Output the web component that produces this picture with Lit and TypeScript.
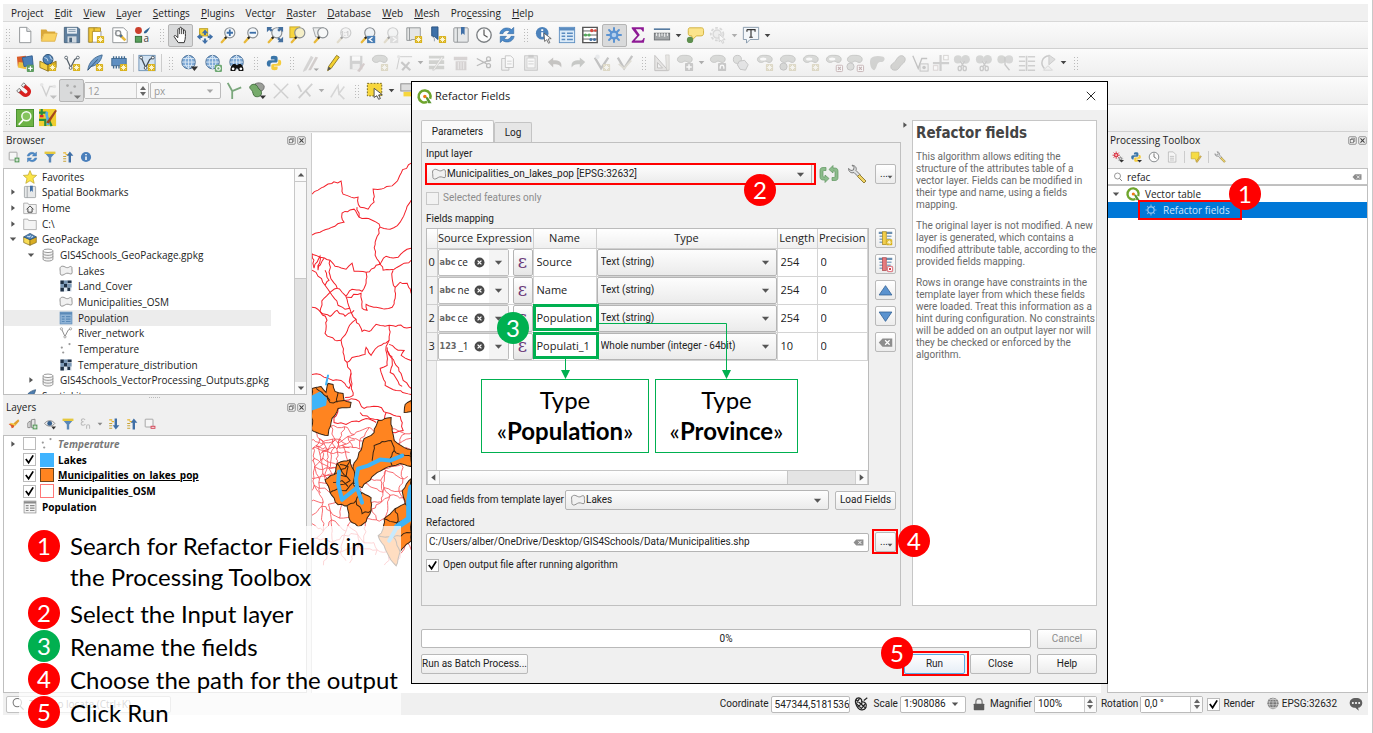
import { LitElement, html, svg, css, nothing } from "lit";
import { customElement, property } from "lit/decorators.js";
import { classMap } from "lit/directives/class-map.js";

/* ---------- icon library (20 x 20 grid) ---------- */
const lens = (fill: string) => svg`
  <path d="M8 12.5 3 18" stroke="#e8b93a" stroke-width="2.6" stroke-linecap="round"/>
  <path d="M8.6 11.8 6.6 14" stroke="#222" stroke-width="2.4"/>
  <circle cx="12" cy="7.5" r="5.6" fill="${fill}" stroke="#8a8f93" stroke-width="1.3"/>`;
const star = svg`<g transform="translate(11 11)"><rect width="8" height="8" rx="1" fill="#d9b21c"/><path d="M4 1v6M1 4h6M1.9 1.9l4.2 4.2M6.1 1.9 1.9 6.1" stroke="#fffbe0" stroke-width="1"/></g>`;
const cross = svg`<g transform="translate(12 12)"><rect x=".5" y=".5" width="7" height="7" rx="1" fill="#fff" stroke="#d23c4c"/><path d="M2.4 2.4l3.2 3.2M5.6 2.4 2.4 5.6" stroke="#d23c4c" stroke-width="1.3"/></g>`;
const gearPath = "M10 2.2v15.6M2.2 10h15.6M4.5 4.5l11 11M15.5 4.5l-11 11";
const gear = (c: string, hole: string) => svg`<path d="${gearPath}" stroke="${c}" stroke-width="2.2" stroke-linecap="round"/><circle cx="10" cy="10" r="5" fill="${c}"/><circle cx="10" cy="10" r="2.6" fill="${hole}"/>`;
const blob = svg`<path d="M2 4.500C4 1 8 1.500 11 1.500c4 0 7 1.500 7 4.500s-3 4-5 3-3-1.500-4.500-.5C6 10.500 0 9 2 4.500Z" fill="#aab0a4" stroke="#777c72"/>`;
const globe = svg`<circle cx="9.500" cy="9" r="7.500" fill="#7ea9d6" stroke="#41668f"/><path d="M2 9h15M3.500 5h12M3.500 13h12M9.500 1.500v15M9.500 1.500c-5 4-5 11 0 15M9.500 1.500c5 4 5 11 0 15" fill="none" stroke="#e3eef8" stroke-width=".9"/>`;
const refreshArrows = (c: string) => svg`<path d="M2 8.500C3 2 11 .5 15 4l2.500-2.500v7H10.500L13 6C10.500 4 7 5 5.500 8.500ZM18 11.500c-1 6.500-9 8-13 4.500l-2.500 2.500v-7h7L7 14c2.500 2 6 1 7.500-2.500Z" fill="${c}" stroke="#2f629a" stroke-width=".6"/>`;
const python = svg`<path d="M10 2c-3 0-3.500 1-3.500 2.500V6h4v1H4.800C3 7 2 8.500 2 10.500S3 14 4.500 14H6v-2c0-1.600 1-2.500 2.600-2.500H12c1.300 0 2-.8 2-2V4.500C14 2.800 12.700 2 10 2Z" fill="#3a75a8"/><path d="M10.500 18c3 0 3.500-1 3.500-2.500V14h-4v-1h5.700c1.800 0 2.300-1.500 2.300-3.200C18 7.800 17.500 6.500 15.500 6.500H14.700V8.500c0 1.600-1 2.500-2.600 2.500H9c-1.300 0-2 .8-2 2v2.500c0 1.700 1 2.500 3.500 2.500Z" fill="#f5cc3c"/>`;
const polyShape = svg`<path d="M2.500 4c2-1.500 4-1 6.500.4s4.500.8 6-.4c2-1.200 4-.2 3.500 3-.2 2 1 5-.4 7-2 1-4-1.400-7.100-.8-2.800.6-4.400 3-7 2.800C1 15.500 2 13 1.700 10.500 1.500 8 .8 5.200 2.500 4Z" fill="#f1f1f1" stroke="#8b8b8b" stroke-width="1.300"/>`;
const vLine = (c: string) => svg`<path d="M4 5 8.500 15 13 6 17 4" fill="none" stroke="${c}" stroke-width="1.400"/><g fill="#fff" stroke="${c}"><circle cx="3.500" cy="4" r="1.600"/><circle cx="8.500" cy="15.500" r="1.600"/><circle cx="16.500" cy="4" r="1.600"/></g>`;
const tableGrid = (bg: string, line: string) => svg`<rect x="1.500" y="1.500" width="17" height="17" fill="${bg}" stroke="${line}"/><path d="M1.500 3.500h17" stroke="${line}" stroke-width="3"/><path d="M4 8h4M10 8h6.500M4 11.500h4M10 11.500h6.500M4 15h4M10 15h6.500" stroke="${line}" stroke-width="1.700"/>`;
const docFile = svg`<path d="M4 1.500h8l4.500 4.500v12.500H4Z" fill="#fff" stroke="#8b8f92"/><path d="M12 1.500v4.500h4.500" fill="#e4e6e8" stroke="#8b8f92"/>`;
const scissors = svg`<g fill="none" stroke="#8c8c8c" stroke-width="1.500"><path d="M8 8l4 6M13 8l-4 6"/><ellipse cx="7.500" cy="16" rx="1.800" ry="2.400"/><ellipse cx="13" cy="16" rx="1.800" ry="2.400"/></g>`;
const arrowsIn = svg`<path d="M2 2h5v3h3v2H6V4H2Z" fill="#e9b52d"/><path d="M2 9h5M2 13h5M2 17h5" stroke="#c7a338" stroke-width="1.700"/>`;

const icons: Record<string, unknown> = {
  none: nothing,
  newfile: docFile,
  folder: svg`<path d="M1 4h6l1.500 2H17v3H4L1 17Z" fill="#d9a83a"/><path d="M4.500 8H19l-2.500 9H1.500Z" fill="#f9d262" stroke="#d9a83a" stroke-width=".8"/>`,
  save: svg`<path d="M1.500 1.500h15l2 2v15h-17Z" fill="#5f7f9e" stroke="#48637d"/><rect x="4.500" y="2" width="11" height="6.500" fill="#e6edf3"/><path d="M6 4h8M6 6h8" stroke="#7c93a8"/><rect x="5" y="11.500" width="10" height="7" fill="#cfd8df"/><rect x="7" y="13" width="3" height="5" fill="#48637d"/>`,
  layout: svg`<path d="M1.500 2h10l4 4v12h-14Z" fill="#fff" stroke="#8b8f92"/><path d="M2 2h6v4H6v12H2Z" fill="#f3c93b" stroke="#b18f24"/><path d="M8 2h7v4H8Z" fill="#f3c93b" stroke="#b18f24"/>${star}`,
  layoutmgr: svg`<path d="M2 2h12l4 4v12.500H2Z" fill="#fff" stroke="#8b8f92"/><path d="M4 5h5M4 8h3" stroke="#c5c9cc"/><circle cx="8" cy="8" r="2.800" fill="none" stroke="#8b8f92" stroke-width="1.500"/><path d="m10 10 6 6" stroke="#e7b93c" stroke-width="3"/><path d="m10 10 2 2" stroke="#4f6f95" stroke-width="3"/>`,
  style: svg`<circle cx="5" cy="5" r="3.800" fill="#cb3f2c"/><path d="M11 8c0-3 3-4 7-7-2 4-4 8-7 7Z" fill="#2e6293"/><rect x="1.500" y="11.500" width="7" height="6.500" fill="#58a05c" stroke="#2f6b34"/><text x="10.500" y="18" font-size="11" font-family="Open Sans" fill="#444">a</text>`,
  hand: svg`<path d="M7 18.500c-1-2-3.500-4.500-4.500-6.500-.6-1.300 1-2 2-.9L6.500 13V4c0-1.500 2-1.500 2 0V2.500c0-1.500 2.200-1.500 2.200 0V4c0-1.400 2.100-1.400 2.100 0v1.500c0-1.300 2-1.300 2 0 0 4 .7 8-1.300 13Z" fill="#fff" stroke="#333" stroke-width="1.100"/><path d="M8.500 4v5M10.700 4v5M12.800 5v4" stroke="#333"/>`,
  panfree: svg`<rect x="4" y="3" width="9" height="8" fill="#f7d63c" stroke="#b79a1d"/><g fill="#3f6fa7"><path d="m10 4 3.500 4h-2.300v2H8.800V8H6.500ZM10 20l3.500-4h-2.300v-2H8.800v2H6.500ZM1 12l4-3.500v2.300h2v2.400H5v2.300ZM19 12l-4-3.500v2.300h-2v2.400h2v2.300Z"/></g>`,
  zoomin: svg`${lens("#f4f8fc")}<path d="M12 4v7M8.500 7.500h7" stroke="#3b6ea8" stroke-width="2"/>`,
  zoomout: svg`${lens("#f4f8fc")}<path d="M8.500 7.500h7" stroke="#3b6ea8" stroke-width="2"/>`,
  zoomfull: svg`${lens("#eef3f8")}<g fill="#45709f"><path d="M1 1h6L5.500 2.500l2 2-2 2-2-2L1 7ZM19 1h-6l1.500 1.500-2 2 2 2 2-2L19 7ZM19 18h-6l1.500-1.500-2-2 2-2 2 2L19 12Z"/></g>`,
  zoomsel: svg`<rect x="1" y="1" width="11" height="12" fill="#f7d63c" stroke="#c3a42a"/>${lens("#f5efc8")}`,
  zoomlayer: svg`<path d="M1 2h12v10H4Z" fill="#eceeee" stroke="#9a9d9f"/>${lens("#f7f8f8")}`,
  native: svg`${lens("#f2f2f2")}<text x="6" y="11" font-size="7" font-family="Open Sans" font-weight="700" fill="#888">1:1</text>`,
  zoomlast: svg`${lens("#eef2f5")}<rect x="9" y="11" width="9" height="8" fill="#4b7fb5"/><path d="m15 12.500-3.500 2.500 3.500 2.500" stroke="#fff" fill="none" stroke-width="1.500"/>`,
  zoomnext: svg`${lens("#eef2f5")}<rect x="9" y="11" width="9" height="8" fill="#bbb"/><path d="m12 12.500 3.500 2.500-3.500 2.500" stroke="#fff" fill="none" stroke-width="1.500"/>`,
  newview: svg`<path d="M2 2h15v13H7v1H2Z" fill="#e5e6e6" stroke="#909496"/><path d="M5 2v14" stroke="#909496"/>${star}`,
  newbook: svg`<path d="M3 1h7v14l-3.500-3L3 11Z" fill="#3d70a8" stroke="#27507f"/><path d="M3 11l3 3v3" stroke="#8b98a5"/>${star}`,
  books: svg`<rect x="2" y="2" width="16" height="16" rx="1" fill="#e6e8e9" stroke="#8d9194"/><path d="M6 2v16" stroke="#8d9194"/><path d="M10 1h4v9l-2-2-2 2Z" fill="#3f6fa7"/>`,
  clock: svg`<circle cx="10" cy="10" r="8" fill="#fbfbfb" stroke="#7b7f82" stroke-width="1.500"/><path d="M10 4v6l4 2.500" fill="none" stroke="#555" stroke-width="1.300"/>`,
  refresh: refreshArrows("#4c8ac9"),
  identify: svg`<circle cx="8" cy="8" r="7" fill="#4c82bb"/><path d="M8 7v5M8 3.500v2" stroke="#fff" stroke-width="2.200"/><path d="m10 8 8 6-3.500.5 2 4-1.500.7-2-4-2.300 2Z" fill="#fff" stroke="#555" stroke-width=".9"/>`,
  table: tableGrid("#dcebf8", "#5b8cc0"),
  calc: svg`<path d="M2 1.500h16v17H2Z" fill="#fff" stroke="#555" stroke-width="1.600"/><path d="M2 5.500h16M2 10h16M2 14.500h16" stroke="#555"/><g fill="#d94a3f"><circle cx="12" cy="5" r="1.900"/><circle cx="16" cy="5" r="1.500"/></g><g fill="#53ab5b"><circle cx="5" cy="10" r="1.800"/><circle cx="9" cy="10" r="1.800"/></g><g fill="#4472a5"><circle cx="11" cy="15" r="1.700"/><circle cx="15" cy="15" r="1.700"/></g>`,
  gear: gear("#5b93d2", "#b4d0ee"),
  gearlight: svg`<path d="${gearPath}" stroke="#7fb3e6" stroke-width="1.600"/><circle cx="10" cy="10" r="4.500" fill="#0078d7" stroke="#9cc8f0" stroke-width="1.600"/>`,
  sigma: svg`<path d="M3 1.500h13.500v4.500H15c-.4-1.800-1.500-2.500-3.500-2.500H7.500L12 10l-5.500 6h6c2 0 3-.8 3.600-2.800h1.400L16.500 18.500H3v-1.200L9 10.500 3 2.800Z" fill="#8e1a95"/>`,
  measure: svg`<path d="M1 3.500h18" stroke="#34618e" stroke-width="1.500"/><rect x="1.500" y="8" width="17" height="7.500" fill="#a3a6a8" stroke="#6b6f72"/><path d="M4 8v3M7 8v4M10 8v3M13 8v4M16 8v3" stroke="#fff"/>`,
  tip: svg`<path d="M4 2h13c2 0 2.500 1 2.500 3v3c0 2-1 3-3 3h-5l-5 5v-5C3 11 2.500 10 2.500 8V5c0-2 .5-3 1.500-3Z" fill="#fbe48b" stroke="#cfae38"/><circle cx="4.500" cy="15.500" r="3.500" fill="#5e8f4f"/>`,
  action: svg`<g opacity=".8"><circle cx="9" cy="9" r="7" fill="none" stroke="#999" stroke-width="2" stroke-dasharray="3 2"/><circle cx="9" cy="9" r="4.500" fill="#ddd" stroke="#999" stroke-width="1.500"/></g><path d="m11 9 7 6-3 .4 1.500 3.200-1.500.7-1.600-3.500-2 1.700Z" fill="#fff" stroke="#999"/>`,
  text: svg`<path d="M1.500 1.500h17V15H9l-4 4v-4H1.500Z" fill="#f4f7fa" stroke="#8295a8"/><path d="M5.500 4h9v2.500M10 4v8.500M5.500 4v2.500M8 12.500h4" stroke="#333" stroke-width="1.300" fill="none"/>`,
  layers: svg`<path d="m1 3 10-1 1 10-10 2Z" fill="#d95c2a"/><path d="m3 9 9 1-1 7-9-2Z" fill="#efc23f"/><path d="m7 4 11-2 1 10-10 2Z" fill="#4b7fb8" stroke="#335e8d"/><rect x="12" y="12" width="8" height="8" rx="1" fill="#5e9d61"/><path d="M16 13.500v5M13.500 16h5" stroke="#fff" stroke-width="1.400"/>`,
  gpkgnew: svg`<path d="M1 8l9 4v7l-9-4Z" fill="#f4cf43" stroke="#8f741b"/><path d="m10 12 9-4v7l-9 4Z" fill="#d9ad23" stroke="#8f741b"/><circle cx="10" cy="6" r="5.500" fill="#4e81b4" stroke="#244a70"/><path d="M6 4l3 1 1 3M12 2l1 3 2 1" stroke="#c9ddef" fill="none"/>${star}`,
  gpkg: svg`<path d="M1 7l9 4v8l-9-4Z" fill="#f8dc55" stroke="#7d6518"/><path d="m10 11 9-4v8l-9 4Z" fill="#d9ad23" stroke="#7d6518"/><path d="M1 7l9-5 9 5-9 4Z" fill="#4e81b4" stroke="#244a70"/><path d="M6 6l3 1 2-2M12 8l2-2" stroke="#d4e5f4" fill="none" stroke-width="1.500"/>`,
  vnew: svg`${vLine("#55606a")}${star}`,
  feather: svg`<path d="M2 18C3 9 9 3 18 1c-1 7-6 12-13 13Z" fill="#6f9cca" stroke="#3e6890"/><path d="M2 18 13 6" stroke="#2f5274"/>${star}`,
  memory: svg`<rect x="2" y="5" width="16" height="8" fill="#5f8fc2" stroke="#3e6890"/><path d="M4 2.500v3M7 2.500v3M10 2.500v3M13 2.500v3M16 2.500v3M4 13v3M7 13v3M10 13v3" stroke="#3e6890" stroke-width="1.500"/>${star}`,
  virtual: svg`<rect x="1" y="1.500" width="18" height="17" fill="#d3e3f2" stroke="#6b90b5"/>${vLine("#3f4b56")}${star}`,
  globeadd: svg`${globe}<path d="M12 14h8l-4 5Z" fill="#333"/>`,
  globecog: svg`${globe}<rect x="12" y="12" width="8" height="8" rx="1.500" fill="#6da872"/><circle cx="16" cy="16" r="2" fill="none" stroke="#fff" stroke-width="1.300"/>`,
  binoc: svg`${globe}<path d="M3 19c-1-3 1-7 3-8h2l2 1.500L12 11h2c2 1 4 5 3 8h-5l-1-3H9l-1 3Z" fill="#111"/><circle cx="5.700" cy="16.500" r="1.500" fill="#fff"/><circle cx="14.300" cy="16.500" r="1.500" fill="#fff"/>`,
  python,
  pencils: svg`<path d="m3 17 8-15 3 2-8 14-4 2Z" fill="#aaa6a2"/><path d="m8 18 8-15 3 1-8 14Z" fill="#b98f86"/><path d="m14 16h6l-3 3Z" fill="#333"/>`,
  pencil: svg`<path d="M4 18.500 5 14 14 1.500l3 2L8 16Z" fill="#f5d12f" stroke="#8b7828"/><path d="M4 18.500 5 14l3 2Z" fill="#555"/>`,
  savered: svg`<path d="M2 2h14v15H2Z" fill="#9a9d9f"/><rect x="4.500" y="2.500" width="9" height="5" fill="#fff"/><rect x="5" y="11" width="8" height="6" fill="#e5e5e5"/><path d="m10 19 7-9 2 1-6 9Z" fill="#c88"/>`,
  addfeat: svg`${blob}${star}`,
  vertex: svg`<path d="M2 17 5 3h14" fill="none" stroke="#888"/><path d="m7 9 10 9M16 9 8 18" stroke="#888" stroke-width="2.400"/><circle cx="4" cy="3" r="1.800" fill="#ccc"/>`,
  tableedit: svg`<path d="M1 2h17v3H1ZM1 7h17v4H1ZM1 13h17v4H1Z" fill="#9aa18c"/><path d="m5 18 10-15 2 1L7 18Z" fill="#f2ead2" stroke="#888" stroke-width=".7"/>`,
  trash: svg`<path d="M2 3h15v4H2ZM4 8h12v10H4Z" fill="#b79c9c"/><path d="M7 9v8M10 9v8M13 9v8" stroke="#efe5e5"/>`,
  cut: svg`<path d="M2 5l11 6M2 13l11-5 5-1" stroke="#666" stroke-width="1.400" fill="none"/><circle cx="15" cy="5.500" r="2.200" fill="none" stroke="#666" stroke-width="1.400"/><circle cx="15" cy="13" r="2.200" fill="none" stroke="#666" stroke-width="1.400"/>`,
  copy: svg`<path d="M3 5h8v13H3Z" fill="#eee" stroke="#777"/><path d="M7 2h6l3 3v10H7Z" fill="#fff" stroke="#777"/><path d="M9 8h5M9 11h5" stroke="#999"/>`,
  paste: svg`<rect x="3" y="2" width="14" height="16" fill="#ddd" stroke="#777"/><rect x="5.500" y="4.500" width="9" height="11" fill="#fff" stroke="#999"/><path d="M7 8h6M7 11h6" stroke="#999"/><rect x="7" y="1" width="6" height="3" fill="#888"/>`,
  undo: svg`<path d="m2 9 6-5v3c7 0 10 2 9 8-2-3-4-4-9-3.500V15Z" fill="#8a7a6a"/>`,
  redo: svg`<path d="m18 9-6-5v3C5 7 2 9 3 15c2-3 4-4 9-3.500V15Z" fill="#7f8a78"/>`,
  vadd: svg`<path d="M2 4l7 12 8-12" fill="none" stroke="#777" stroke-width="2.500"/><circle cx="5" cy="3" r="2.500" fill="#c8d8e8"/>${star}`,
  vcheck: svg`<path d="M2 4l7 12 9-14" fill="none" stroke="#777" stroke-width="2.500"/><path d="M3 11l6 5 8-9" fill="none" stroke="#c9b97b" stroke-width="2"/>`,
  ruler: svg`<path d="M2 1.500v17h15Z" fill="#d8cdc4" stroke="#776d66"/><path d="M5 9.500v6h5.500Z" fill="#f4f4f4" stroke="#776d66"/><path d="M14 1h4v17h-3Z" fill="#d8cfb8" stroke="#8a816a" stroke-width=".7"/>`,
  move: svg`${blob}<rect x="10" y="10" width="9" height="9" rx="1" fill="#888"/><path d="M14.500 11.500v6M11.500 14.500h6" stroke="#fff" stroke-width="1.700"/>`,
  rotate: svg`${blob}<rect x="10" y="10" width="9" height="9" rx="1" fill="#888"/><path d="M12.500 16.500v-2a2 2 0 0 1 4 0v2" fill="none" stroke="#fff" stroke-width="1.500"/>`,
  simplify: svg`<circle cx="6" cy="6" r="4.500" fill="#b9beb2" stroke="#777"/><path d="m8 8 6-1 4 5-3 6-6-1-3-5Z" fill="#c8ccd2" stroke="#777"/>`,
  ring: svg`${blob}<ellipse cx="8" cy="5.500" rx="3.500" ry="1.700" fill="#fff"/>${star}`,
  part: svg`${blob}<circle cx="5" cy="14" r="4" fill="#aab0a4" stroke="#777"/>${star}`,
  delring: svg`${blob}<ellipse cx="8" cy="5.500" rx="3.500" ry="1.700" fill="#fff"/>${cross}`,
  delpart: svg`${blob}<circle cx="5" cy="14" r="4" fill="#b9beb2" stroke="#777"/>${cross}`,
  reshape: svg`<path d="M3 5c4-4 10-3 14-2 3 2 1 6-3 6-5 0-3 6-7 9-4 0-6-9-4-13Z" fill="#9ea198"/>`,
  offset: svg`<path d="M2 14c0-3 3-3 5-6s4-7 8-6c5 2 3 7 0 9s-4 7-8 7c-3 0-5-1-5-4Z" fill="#a3a396" stroke="#77776a"/>`,
  vdel: svg`<path d="M2 2l6 14 4-11h6" fill="none" stroke="#777" stroke-width="1.500"/><rect x="10" y="11" width="9" height="8" fill="#eee" stroke="#777"/><circle cx="14.500" cy="15" r="2" fill="#888"/>`,
  splitp: svg`<path d="M9.500 1v18M1 10h18" stroke="#999" stroke-width="2.500"/><rect x="13" y="1.500" width="5" height="5" fill="#fff" stroke="#a98"/><rect x="1.500" y="13" width="5" height="5" fill="#fff" stroke="#c99"/>`,
  split: svg`<circle cx="5.500" cy="6" r="4.500" fill="#a0a8a0"/><circle cx="14" cy="6" r="4.800" fill="#a0a8a0"/>${scissors}`,
  merge: svg`<circle cx="6" cy="6" r="4.500" fill="#a0a89a"/><circle cx="14.500" cy="6" r="4.500" fill="#a6aba6"/><path d="M10 3v9l5 6" stroke="#888" fill="none" stroke-width="1.500"/>`,
  align: svg`<path d="M1 3h7M11 3h8M1 8h7M11 8h8M1 13h7M11 13h8M1 18h7M11 18h8M9.500 2v17" stroke="#999" stroke-width="1.800"/>`,
  rotsym: svg`<path d="M11 2C3 3 1 11 6 16" fill="none" stroke="#888" stroke-width="1.600"/><path d="M11 1v11l7-6Z" fill="#bbb" stroke="#888"/><path d="M5 18h10l-5-5Z" fill="#eee" stroke="#aaa"/>`,
  magnet: svg`<g transform="rotate(-50 10 10)"><path d="M4 4v7a6 6 0 0 0 12 0V4h-4v7a2 2 0 0 1-4 0V4Z" fill="#d8201f"/><path d="M4 3h4v3H4ZM12 3h4v3h-4Z" fill="#eee" stroke="#555" stroke-width=".7"/></g>`,
  vsnap: svg`<path d="M3 3l5 12 4-10h6" fill="none" stroke="#999" stroke-width="1.500"/><circle cx="3" cy="3" r="2" fill="#ccc"/><circle cx="17" cy="5" r="2" fill="#ccc"/><path d="M12 15h8l-4 4Z" fill="#777"/>`,
  dots: svg`<g fill="#aaa"><circle cx="5" cy="4" r="1.500"/><circle cx="13" cy="5" r="1.500"/><circle cx="9" cy="12" r="1.500"/></g><path d="M12 15h8l-4 4Z" fill="#777"/>`,
  topo: svg`<path d="M3 1l5 9 10-4M8 10v9" stroke="#7aa77c" stroke-width="2" fill="none"/>`,
  polyg: svg`<path d="M8 2c4-2 9-1 10 3 0 4-3 6-7 5Z" fill="#9b9e98" stroke="#666"/><path d="M3 4c3-3 7-1 8 2s4 2 4 6-4 5-7 4-2-5-4-7-3-3-1-5Z" fill="#76ab6b" stroke="#3e6a3a"/><path d="M13 15h7l-3.500 4Z" fill="#333"/>`,
  xcross: svg`<path d="m2 2 16 16M18 2 2 18" stroke="#999" stroke-width="1.600"/>`,
  cutseg: svg`<path d="m2 3 4 8M18 2 3 18M10 9l6 7" stroke="#999" stroke-width="2"/>`,
  trace: svg`<path d="m2 17 8-13 1 9 6-8M11 13l6 6" stroke="#aaa" stroke-width="1.800" fill="none"/>`,
  select: svg`<rect x="1.500" y="1.500" width="16" height="14" fill="#f7d63c" stroke="#6b5d17" stroke-dasharray="2 1.500"/><path d="m9 7 9 7-4 .4 2 4-2 .8-2-4-3 2Z" fill="#fff" stroke="#444"/>`,
  selform: svg`<rect x="2" y="2" width="15" height="8" fill="#ddd" stroke="#888"/><rect x="5" y="11" width="14" height="5" fill="#f7d63c"/>`,
  greenlens: svg`<rect x=".5" y=".5" width="19" height="19" fill="#6db345" stroke="#418a2a"/><circle cx="11.500" cy="8" r="5" fill="#86c45e" stroke="#f6fbf2" stroke-width="1.700"/><path d="m8 12-5 5.500" stroke="#fff" stroke-width="2"/>`,
  maptool: svg`<rect width="19" height="19" fill="#f0cd2f"/><path d="M0 4h8M3 0v9M0 12h7v7M10 10l4 9" stroke="#2c8c3c" stroke-width="2.500"/><path d="M9 3c-3 6 3 6 1 15" stroke="#58aee8" stroke-width="3" fill="none"/><path d="m8 15 10-14 2 1-9 14Z" fill="#a4471e"/><path d="M1 8h4" stroke="#d23" stroke-width="2.500"/>`,
  arrow: svg`<path d="M2 6h16l-8 9Z" fill="#444"/>`,
  // dock panels
  addlayer: svg`<rect x="2" y="2" width="13" height="13" rx="1" fill="#f6f6f6" stroke="#777"/><rect x="11" y="11" width="8" height="8" fill="#5e9d61"/><path d="M15 12.500v5M12.500 15h5" stroke="#fff" stroke-width="1.500"/>`,
  filter: svg`<path d="M1 3h18l-7 8v8H8v-8Z" fill="#5a88b8"/><path d="M1 1h18v4H1Z" fill="#e5c83c"/>`,
  collapse: svg`${arrowsIn}<path d="m13 1 6 7h-4v11h-4V8H8Z" fill="#3f6fa7"/>`,
  expand: svg`${arrowsIn}<path d="m13 19 6-7h-4V1h-4v11H8Z" fill="#3f6fa7"/>`,
  info: svg`<circle cx="10" cy="10" r="8.500" fill="#4a7fbb"/><path d="M10 9v6M10 5v2" stroke="#fff" stroke-width="2.500"/>`,
  favorite: svg`<path d="m10 .8 2.700 6.400 6.800.5-5.200 4.500 1.700 6.900-6-3.700-6 3.700 1.700-6.900L.5 7.700l6.800-.5Z" fill="#fbe548" stroke="#b59b1d" stroke-width=".9"/>`,
  home: svg`<path d="M1 3h6l1 2h11v13H1Z" fill="#f4f4f4" stroke="#999"/><path d="m5 12 5-5 5 5M7 11v5h6v-5" fill="none" stroke="#444" stroke-width="1.400"/>`,
  dir: svg`<path d="M1 3h6l1 2h11v13H1Z" fill="#f4f4f4" stroke="#999"/>`,
  db: svg`<path d="M3 4v12c0 3.500 14 3.500 14 0V4" fill="#f3f3f3" stroke="#8e8e8e" stroke-width="1.300"/><ellipse cx="10" cy="4" rx="7" ry="2.500" fill="#fff" stroke="#8e8e8e" stroke-width="1.300"/><path d="M3 8c0 3.300 14 3.300 14 0M3 12c0 3.300 14 3.300 14 0" fill="none" stroke="#8e8e8e" stroke-width="1.300"/>`,
  poly: polyShape,
  raster: svg`<rect x="2" y="2" width="16" height="16" fill="#dfe8f0"/><path d="M2 2h5v5H2ZM12 2h6v4h-6ZM7 7h5v5H7ZM2 12h5v6H2ZM12 12h4v5h-4Z" fill="#1f3146"/><path d="M7 2h5v5H7ZM12 7h6v5h-6ZM2 7h5v5H2Z" fill="#7b98b6"/>`,
  line: vLine("#8b8b8b"),
  point: svg`<g fill="#999"><circle cx="15" cy="3" r="1.600"/><circle cx="4" cy="8" r="1.600"/><circle cx="6" cy="15" r="1.600"/></g>`,
  tablegrey: tableGrid("#f4f4f4", "#8b8b8b"),
  tableblue: tableGrid("#8fb3d6", "#5b8ab8"),
  featherp: svg`<path d="M2 18C3 9 9 3 18 1c-1 7-6 12-13 13Z" fill="#4d7cae" stroke="#2f5274"/>`,
  brush: svg`<path d="m9 9 8-7 2 3-7 8Z" fill="#e0a030"/><path d="M1 10c4-2 6-1 10 2-1 4-3 5-5 5 0-3-2-5-5-7Z" fill="#dd5b2b"/><path d="M4 9c3 0 5 1 8 3" stroke="#f4cf43" stroke-width="2.500" fill="none"/>`,
  group: svg`<path d="M3 8l4-3v11H3ZM9 3l6-1v14H9Z" fill="#e5e5e5" stroke="#777" stroke-width="1.300"/><rect x="11" y="11" width="8" height="8" fill="#5e9d61"/><path d="M15 12.500v5M12.500 15h5" stroke="#fff" stroke-width="1.500"/>`,
  eye: svg`<path d="M1 9c4-6 13-6 17 0-4 6-13 6-17 0Z" fill="#ececec" stroke="#777" stroke-width="1.300"/><circle cx="9.500" cy="9" r="4" fill="#355f8d"/><path d="M12 14h8l-4 5Z" fill="#333"/>`,
  eps: svg`<path d="M8.500 3.500C6-.5 1.500 2 2.500 4.500 3 6 5 6.200 6 6.200 3 6.200 1.500 7.800 2 10c.8 2.800 5.500 2.600 7 0M11 18v-5c0-2.500 5-2.500 5 0v5" fill="none" stroke="#bbb" stroke-width="1.700"/>`,
  removelayer: svg`<rect x="2" y="2" width="13" height="13" rx="1" fill="#f6f6f6" stroke="#777"/><rect x="11" y="13" width="8" height="5" fill="#d4485a"/><path d="M12.500 15.500h5" stroke="#fff" stroke-width="1.500"/>`,
  redcog: svg`<g transform="scale(.7)">${gear("#d9303f", "#f2b8bd")}</g><g transform="translate(9 8) scale(.5)">${gear("#888", "#ddd")}</g><path d="M12 15h8l-4 4Z" fill="#333"/>`,
  pyarrow: svg`${python}<path d="M12 15h8l-4 4Z" fill="#333"/>`,
  log: svg`<path d="M4 1.500h8l4.500 4.500v12.500H4Z" fill="#f5f5f5" stroke="#a5a5a5"/><path d="M6.500 9h7M6.500 12h7M6.500 15h7" stroke="#a5a5a5"/>`,
  note: svg`<path d="M2 2h13v10l-5 5-1-4H2Z" fill="#f6dc45" stroke="#bfa42a"/><path d="m10 18 7-10 2 1-7 10Z" fill="#eec64f" stroke="#8e7426" stroke-width=".7"/>`,
  wrench: svg`<path d="M1.500 4.500c0 3.500 3 5 5.500 4l4 4 2-2-4-4c1-2.500-.6-5-4-5.300L7 3.500 6.500 6 4 6.500Z" fill="#dfe1e2" stroke="#777"/><path d="m10.500 12.500 2-2L19 17l-2 2Z" fill="#f0d465" stroke="#93803a"/>`,
  iterate: svg`<g fill="#8cbc8c" stroke="#5e955f" stroke-width=".7"><path d="M7 3.500H4c-2 0-3 1-3 3v6c0 2.500 1 3.500 3.500 3.500H6v2.500L10 14.500 6 11v2H5c-.7 0-1-.3-1-1V7.500c0-.7.300-1 1-1h2Z"/><path d="M13 16.500h3c2 0 3-1 3-3v-6C19 5 18 4 15.500 4H14V1.500L10 5.500 14 9V7h1c.7 0 1 .3 1 1v4.500c0 .7-.300 1-1 1h-2Z"/></g>`,
  addfield: svg`<rect x="1" y="1" width="18" height="3" fill="#6c8fb0"/><path d="M2 7h5M2 11h5M2 15h5M12 7h6M12 11h5" stroke="#8aa9c7" stroke-width="2"/><rect x="6" y="1" width="5" height="17" fill="#f2ce4a" stroke="#a98b24"/>${star}`,
  delfield: svg`<rect x="1" y="1" width="18" height="3" fill="#6c8fb0"/><path d="M2 7h5M2 11h5M2 15h5M12 7h6M12 11h5" stroke="#8aa9c7" stroke-width="2"/><rect x="6" y="1" width="5" height="17" fill="#e67b7f" stroke="#b04b50"/>${cross}`,
  up: svg`<path d="M10 3.500 18.500 16h-17Z" fill="#5b93cf" stroke="#2e5d92"/>`,
  down: svg`<path d="M10 16.500 18.500 4h-17Z" fill="#5b93cf" stroke="#2e5d92"/>`,
  clear: svg`<path d="M1 10 6 4.500h13v11H6Z" fill="#8d8d8d"/><path d="m9.500 7 6 6M15.500 7l-6 6" stroke="#fff" stroke-width="1.600"/>`,
  closeround: svg`<circle cx="10" cy="10" r="9" fill="#4a4a4a"/><path d="m6.500 6.500 7 7M13.500 6.500l-7 7" stroke="#fff" stroke-width="2.300"/>`,
  search: svg`<circle cx="9" cy="8" r="6" fill="none" stroke="#777" stroke-width="1.500"/><path d="m13 13 5 5" stroke="#777" stroke-width="1.800"/>`,
  qgis: svg`<path d="M13.500 17.200A8 8 0 1 1 17.500 13" fill="none" stroke="#6fa52c" stroke-width="3.400"/><path d="m11 10.500 3.500.5 5 8h-4.500Z" fill="#589632"/><circle cx="10.500" cy="10" r="2.300" fill="#ee7913"/>`,
  x: svg`<path d="m3 3 14 14M17 3 3 17" stroke="#222" stroke-width="1.600"/>`,
  float: svg`<rect x="1.500" y="1.500" width="17" height="17" rx="3" fill="#eee" stroke="#777" stroke-width="1.600"/><rect x="5" y="8" width="7" height="7" fill="none" stroke="#666" stroke-width="1.500"/><path d="M8 8V5h7v7h-3" fill="none" stroke="#666" stroke-width="1.500"/>`,
  shut: svg`<rect x="1.500" y="1.500" width="17" height="17" rx="3" fill="#eee" stroke="#777" stroke-width="1.600"/><path d="m5.500 5.500 9 9M14.500 5.500l-9 9" stroke="#444" stroke-width="2.400"/>`,
  extents: svg`<path d="M4 2c4-2 8 1 7 5 5-1 8 4 6 8s-8 5-11 1-6-11-2-14Z" fill="#e8e8e8" stroke="#222" stroke-width="1.800"/><path d="m3 4 14 12M3 9l8 8M8 2l-4 6M12 8l-6 6M16 10l-6 7" stroke="#222" stroke-width="1.700"/><path d="m14 5 5-4" stroke="#222" stroke-width="1.600"/>`,
  lock: svg`<path d="M5.500 10V7c0-6 9-6 9 0v3" fill="none" stroke="#8a8a8a" stroke-width="2"/><rect x="2.500" y="9.500" width="15" height="9.500" rx="1" fill="#5b5b5b"/>`,
  crs: svg`<circle cx="10" cy="9" r="8" fill="#777"/><path d="M1 7h18M1 11h18M4 3.500h12M4 15h12M10 1v17M10 1c-7 5-7 12 0 17M10 1c7 5 7 12 0 17" stroke="#dcdcdc" fill="none" stroke-width=".9"/>`,
  message: svg`<path d="M10 1.500c6 0 9 3 9 7s-3 6.500-6 7l1 4-5-4c-5-.3-8-3-8-7s3-7 9-7Z" fill="#5e5e5e"/><g fill="#fff"><circle cx="5.500" cy="8.500" r="1.500"/><circle cx="10" cy="8.500" r="1.500"/><circle cx="14.500" cy="8.500" r="1.500"/></g>`,
  tri: svg`<path d="M6 3v14l9-7Z" fill="#555"/>`,
  tridown: svg`<path d="M2 6h16l-8 9Z" fill="#555"/>`,
};
const icon = (name: string, cls = "") =>
  html`<svg class="ic ${cls}" viewBox="0 0 20 20" fill="none" aria-hidden="true">${icons[name]}</svg>`;

const base = css`
  :host { box-sizing: border-box; }
  *, *::before, *::after { box-sizing: border-box; }
  .ic { display: block; flex: none; width: 18px; height: 18px; overflow: visible; }
  button, input, select { font: inherit; color: inherit; margin: 0; padding: 0; border: 0; background: none; border-radius: 0; outline: 0; }
`;

/* ---------- numbered badge ---------- */
@customElement("step-badge")
class StepBadge extends LitElement {
  @property() n = "1";
  @property() tone = "red";
  static styles = css`
    :host { display: block; width: 32px; height: 32px; }
    .disc { width: 32px; height: 32px; border-radius: 50%; display: grid; place-items: center; color: #fff; background: #f00; font: 24px/32px Lato, sans-serif; }
    .green { background: #00b050; }
  `;
  render() {
    return html`<div class=${classMap({ disc: true, green: this.tone === "green" })}>${this.n}</div>`;
  }
}

/* ---------- map canvas ---------- */
const noise = (i: number) => {
  const v = Math.sin(i * 127.1 + 11.7) * 43758.5453;
  return v - Math.floor(v) - 0.5;
};
type Pt = [number, number];
const rough = (pts: Pt[], amp = 2.2, close = false) => {
  const src = close ? [...pts, pts[0]] : pts;
  let d = `M${src[0][0]} ${src[0][1]}`;
  for (let i = 1; i < src.length; i++) {
    const [ax, ay] = src[i - 1], [bx, by] = src[i];
    const steps = Math.max(1, Math.round(Math.hypot(bx - ax, by - ay) / 3.5));
    for (let k = 1; k <= steps; k++) {
      const t = k / steps, j = k === steps ? 0 : amp;
      const s = ax * 3 + by * 7 + k * 5;
      d += `L${(ax + (bx - ax) * t + noise(s) * j).toFixed(1)} ${(ay + (by - ay) * t + noise(s + 3) * j).toFixed(1)}`;
    }
  }
  return close ? d + "Z" : d;
};
const borders: Pt[][] = [
  [[312, 194], [318, 190], [328, 184], [341, 181], [343, 194], [351, 197], [358, 197], [360, 207]],
  [[360, 207], [368, 209], [374, 202], [373, 189], [384, 188], [395, 183], [401, 173], [411, 163]],
  [[312, 235], [320, 232], [332, 227], [344, 222], [342, 213], [354, 209], [359, 217], [366, 218], [376, 222], [380, 227], [390, 229], [400, 222], [405, 212], [411, 200]],
  [[357, 207], [359, 217]],
  [[380, 227], [375, 242], [375, 255], [380, 264], [386, 256], [398, 257], [404, 251], [411, 248]],
  [[380, 264], [383, 270], [394, 269], [411, 260]],
  [[312, 254], [320, 257], [330, 260], [335, 266], [346, 269], [352, 263], [354, 271], [366, 272], [380, 264]],
  [[330, 260], [330, 275], [336, 285], [342, 292], [347, 299], [350, 309], [356, 319], [348, 328], [341, 340], [343, 352], [347, 362]],
  [[366, 272], [366, 283], [362, 291], [352, 289], [346, 296]],
  [[347, 297], [361, 293], [362, 308], [367, 310], [366, 304], [381, 308], [392, 307], [395, 298], [395, 287], [392, 278], [393, 270]],
  [[395, 287], [400, 282], [407, 283], [411, 293]],
  [[312, 270], [318, 276], [325, 285], [330, 292], [338, 305], [345, 309], [350, 308]],
  [[330, 292], [324, 298], [320, 311], [327, 320], [325, 333], [335, 340], [341, 340]],
  [[320, 311], [330, 316], [337, 310], [345, 316], [354, 310]],
  [[356, 319], [362, 331], [371, 330], [376, 324], [389, 325], [398, 325], [411, 327]],
  [[389, 325], [389, 340], [378, 346], [371, 355], [366, 347], [365, 354], [352, 357], [347, 362], [351, 373], [349, 388], [341, 380], [333, 380], [320, 374], [312, 374]],
  [[389, 340], [386, 346], [387, 365], [380, 368], [385, 385], [396, 390], [411, 394]],
  [[389, 344], [395, 348], [404, 350], [401, 355], [411, 360]],
  [[387, 350], [396, 365], [403, 380], [411, 388]], [[387, 347], [392, 360], [390, 372], [402, 386]],
  [[312, 253], [314, 268], [320, 256], [318, 270], [324, 258]],
  [[325, 270], [329, 280], [325, 285]], [[330, 292], [337, 288]],
  [[312, 307], [320, 311]], [[351, 373], [353, 395], [345, 397]],
  [[344, 400], [356, 399], [364, 408], [378, 406], [386, 412], [384, 420], [370, 418], [360, 412]],
  [[386, 412], [400, 416], [403, 430], [392, 432]], [[338, 408], [334, 422], [346, 424], [366, 418], [376, 422]],
];
const mesh: Pt[][] = [];
const node = (c: number, r: number, step: number, x0: number, y0: number): Pt =>
  [x0 + c * step + noise(c * 31 + r * 17) * step * 1.1, y0 + r * step + noise(c * 13 + r * 41 + 5) * step * 1.1];
for (let r = 0; r < 11; r++) for (let c = 0; c < 9; c++) {
  const p = node(c, r, 12, 306, 428);
  if (p[1] > 556) continue;
  if (noise(r * 7 + c * 3) > -0.36) mesh.push([p, node(c + 1, r, 12, 306, 428)]);
  if (noise(r * 5 + c * 11) > -0.32) mesh.push([p, node(c, r + 1, 12, 306, 428)]);
}
for (let r = 0; r < 7; r++) for (let c = 0; c < 5; c++) {
  const p = node(c, r, 7, 318, 440);
  mesh.push([p, node(c + 1, r, 7, 318, 440)], [p, node(c, r + 1, 7, 318, 440)]);
}
const towns: Pt[][] = [
  [[312, 388], [321, 386], [326, 392], [328, 383], [333, 384], [335, 391], [343, 393], [344, 400], [351, 402], [350, 407], [338, 408], [331, 422], [328, 435], [319, 433], [312, 430]],
  [[353, 466], [362, 446], [364, 438], [374, 432], [378, 420], [391, 417], [392, 430], [394, 440], [401, 445], [411, 449], [411, 466], [400, 463], [386, 467], [372, 476], [362, 487], [353, 482]],
  [[325, 479], [334, 474], [337, 463], [350, 459], [354, 470], [354, 485], [362, 492], [371, 497], [371, 510], [366, 521], [358, 526], [350, 520], [347, 505], [338, 504], [330, 492]],
  [[411, 478], [402, 490], [405, 503], [395, 508], [384, 518], [383, 528], [378, 535], [384, 545], [389, 556], [396, 565], [400, 551], [404, 546], [411, 540]],
  [[411, 400], [405, 404], [404, 412], [411, 411]],
];
const townLines: Pt[][] = [
  [[327, 395], [330, 402], [344, 400]], [[316, 388], [322, 392], [330, 400]], [[338, 392], [337, 402]],
  [[372, 460], [374, 445], [382, 441], [391, 440], [394, 450], [390, 458], [392, 465]], [[394, 450], [402, 454], [411, 456]],
  [[353, 482], [346, 490], [338, 488], [330, 492]], [[337, 463], [344, 474], [350, 480], [340, 484]], [[350, 459], [345, 468], [334, 474]],
  [[340, 464], [348, 466], [346, 476], [339, 474]], [[333, 482], [342, 480], [348, 486]],
  [[347, 505], [356, 500], [362, 492]], [[356, 500], [362, 513], [371, 510]],
  [[384, 518], [396, 522], [411, 518]], [[395, 508], [398, 520], [393, 536], [400, 551]], [[405, 503], [411, 510]], [[378, 535], [393, 536], [411, 532]],
];
@customElement("map-canvas")
class MapCanvas extends LitElement {
  static styles = css`
    :host { display: block; overflow: hidden; background: #fff; }
    .map { display: block; width: 100%; height: 100%; }
    .thin { fill: none; stroke: #f4202a; stroke-width: 1; }
    .soft { fill: none; stroke: #f6474e; stroke-width: .8; }
    .town { fill: #ff8420; stroke: #3b2412; stroke-width: 1; }
    .inner { fill: none; stroke: #3b2412; stroke-width: 1; }
    .lake { fill: #3fb4f8; }
    .river { fill: none; stroke: #3fb4f8; stroke-width: 4; stroke-linejoin: round; stroke-linecap: round; }
    .stream { stroke-width: 2; }
    .wide { stroke-width: 6; }
  `;
  render() {
    return html`<svg class="map" viewBox="312 133 789 559" preserveAspectRatio="xMinYMin slice" role="img" aria-label="Map">
      ${borders.map((p) => svg`<path class="thin" d=${rough(p, 2.4)}/>`)}
      ${mesh.map((p) => svg`<path class="soft" d=${rough(p, 2.6)}/>`)}
      ${towns.map((p) => svg`<path class="town" d=${rough(p, 1.6, true)}/>`)}
      ${townLines.map((p) => svg`<path class="inner" d=${rough(p, 2)}/>`)}
      <path class="lake" d="M312 395 320 391 327 398 326 405 312 410Z"/>
      <path class="river stream" d="M328 375 326 384"/>
      <path class="river" d="M402 455 390 460 380 459 368 465 358 468 356 478 357 487 342 499 338 483 339 471M357 487 362 502"/>
      <path class="river wide" d="M411 487 409 500 409 518 397 526"/>
      <path class="river" d="M397 526 389 540"/>
    </svg>`;
  }
}

/* ---------- data ---------- */
type Item = string;
interface Group { width: number; items: Item[]; }
const row1: Group[] = [
  { width: 142, items: ["newfile", "folder", "save", "layout", "layoutmgr", "style"] },
  { width: 351, items: ["hand!", "panfree", "zoomin", "zoomout", "zoomfull", "zoomsel", "zoomlayer", "native~", "zoomlast", "zoomnext~", "newview", "newbook", "books", "clock", "refresh"] },
  { width: 241, items: ["identify", "table", "calc", "gear!", "sigma", "measure", "arrow", "tip", "action~", "arrow~", "text", "arrow"] },
];
const row2: Group[] = [
  { width: 151, items: ["layers", "gpkgnew", "vnew", "feather", "memory", "|", "virtual", "|"] },
  { width: 72, items: ["globeadd", "globecog", "binoc"] },
  { width: 23, items: ["python"] },
  { width: 339, items: ["pencils~", "pencil", "savered~", "addfeat~", "vertex~", "arrow~", "tableedit~", "trash~", "cut~", "copy~", "paste~", "undo~", "redo~", "vadd~", "vcheck~"] },
];
const digitizing: Item[] = ["ruler~", "move~", "arrow~", "rotate~", "simplify~", "ring~", "part~", "ring~"];
const advanced: Item[] = ["delring~", "delpart~", "reshape~", "offset~", "vdel~", "splitp~", "split~", "split~", "merge~", "align~", "rotsym~", "arrow"];
const menus: [string, string, string][] = [
  ["Pro", "j", "ect"], ["", "E", "dit"], ["", "V", "iew"], ["", "L", "ayer"], ["", "S", "ettings"], ["", "P", "lugins"],
  ["Vect", "o", "r"], ["", "R", "aster"], ["", "D", "atabase"], ["", "W", "eb"], ["", "M", "esh"], ["Pro", "c", "essing"], ["", "H", "elp"],
];
const tree: { t: string; i: string; d: number; a?: string; sel?: boolean }[] = [
  { t: "Favorites", i: "favorite", d: 0 },
  { t: "Spatial Bookmarks", i: "books", d: 0, a: "tri" },
  { t: "Home", i: "home", d: 0, a: "tri" },
  { t: "C:\\", i: "dir", d: 0, a: "tri" },
  { t: "GeoPackage", i: "gpkg", d: 0, a: "tridown" },
  { t: "GIS4Schools_GeoPackage.gpkg", i: "db", d: 1, a: "tridown" },
  { t: "Lakes", i: "poly", d: 2 },
  { t: "Land_Cover", i: "raster", d: 2 },
  { t: "Municipalities_OSM", i: "poly", d: 2 },
  { t: "Population", i: "tableblue", d: 2, sel: true },
  { t: "River_network", i: "line", d: 2 },
  { t: "Temperature", i: "point", d: 2 },
  { t: "Temperature_distribution", i: "raster", d: 2 },
  { t: "GIS4Schools_VectorProcessing_Outputs.gpkg", i: "db", d: 1, a: "tri" },
  { t: "SpatiaLite", i: "featherp", d: 0 },
];
const fields = [
  { g: "abc", s: "ce", name: "Source", type: "Text (string)", len: "254" },
  { g: "abc", s: "ne", name: "Name", type: "Text (string)", len: "254" },
  { g: "abc", s: "ce", name: "Population", type: "Text (string)", len: "254" },
  { g: "123", s: "_1", name: "Populati_1", type: "Whole number (integer - 64bit)", len: "10" },
];
const help = [
  ["This algorithm allows editing the", "structure of the attributes table of a", "vector layer. Fields can be modified in", "their type and name, using a fields", "mapping."],
  ["The original layer is not modified. A new", "layer is generated, which contains a", "modified attribute table, according to the", "provided fields mapping."],
  ["Rows in orange have constraints in the", "template layer from which these fields", "were loaded. Treat this information as a", "hint during configuration. No constraints", "will be added on an output layer nor will", "they be checked or enforced by the", "algorithm."],
];
const steps: [string, string, string][] = [
  ["1", "red", "Search for Refactor Fields in the Processing Toolbox"],
  ["2", "red", "Select the Input layer"],
  ["3", "green", "Rename the fields"],
  ["4", "red", "Choose the path for the output"],
  ["5", "red", "Click Run"],
];

/* ---------- dialog ---------- */
@customElement("refactor-dialog")
class RefactorDialog extends LitElement {
  static styles = [base, css`
    :host { display: flex; flex-direction: column; background: #f0f0f0; border: 1px solid #000; font: 10px/14px Roboto, sans-serif; color: #222; }
    .title { flex: none; height: 28px; background: #fff; display: flex; align-items: center; gap: 3px; padding: 0 10px 0 5px; font: 11px/16px "Open Sans", sans-serif; }
    .title .ic { width: 15px; height: 15px; }
    .title .name { flex: 1; }
    .title .close .ic { width: 12px; height: 12px; }
    .body { flex: 1; min-height: 0; display: flex; padding: 10px 10px 0 9px; }
    .left { flex: 1; min-width: 0; display: flex; flex-direction: column; }
    .tabs { display: flex; align-items: flex-end; height: 22px; padding-top: 1px; }
    .tab { height: 20px; width: 38px; border: 1px solid #c4c4c4; border-bottom: 0; background: #e6e6e6; border-radius: 2px 2px 0 0; }
    .tab.on { height: 22px; width: 73px; background: #fafafa; }
    .pane { flex: 1; border: 1px solid #c0c0c0; padding: 3px 4px; display: flex; flex-direction: column; min-height: 0; }
    .split { width: 11px; padding: 1px 0 0; flex: none; }
    .split .ic { width: 8px; height: 8px; }
    .help { width: 185px; flex: none; background: #fff; border: 1px solid #c6c6c6; padding: 2px 3px; color: #6a6a6a; }
    .help h2 { margin: 0 0 8px; font: 700 15px/20px "DejaVu Sans Condensed", "DejaVu Sans", sans-serif; color: #444; }
    .help p { margin: 0 0 9px; line-height: 12px; white-space: nowrap; }
    .row { display: flex; align-items: center; flex: none; }
    .lab { height: 16px; line-height: 16px; }
    .combo { display: grid; align-items: center; border: 1px solid #b4b4b4; border-radius: 2px; background: linear-gradient(#fdfdfd, #ebebeb); height: 20px; min-width: 0; }
    .combo > * { grid-area: 1 / 1; }
    .combo select { appearance: none; width: 100%; height: 100%; padding: 0 18px 0 3px; }
    .combo.lead select { padding-left: 20px; }
    .combo .lay { margin-left: 4px; width: 16px; height: 15px; pointer-events: none; }
    .combo .dd { justify-self: end; margin-right: 6px; width: 9px; height: 9px; pointer-events: none; }
    .btn { height: 19px; border: 1px solid #b9b9b9; border-radius: 2px; background: linear-gradient(#fff, #ececec); display: grid; place-items: center; white-space: nowrap; }
    .btn .ic { width: 15px; height: 15px; }
    .sq { width: 21px; height: 20px; }
    .more { display: flex; align-items: flex-end; justify-content: center; padding: 0 0 3px 2px; line-height: 12px; }
    .more .ic { width: 6px; height: 6px; margin-left: -1px; }
    .inrow { margin-top: 2px; }
    .inl { height: 20px; flex: 1; border-radius: 0; }
    .gapr { display: flex; align-items: center; gap: 8px; margin-left: 7px; }
    .gapr .big { width: 20px; height: 20px; }
    .check { display: flex; align-items: center; gap: 4px; height: 16px; flex: none; }
    .check input { appearance: none; width: 13px; height: 13px; border: 1px solid #b4b4b4; background: #fff; }
    .check input:disabled { background: #f2f2f2; border-color: #c8c8c8; }
    .check input:checked { background: #fff url("data:image/svg+xml,%3Csvg xmlns='http://www.w3.org/2000/svg' viewBox='0 0 12 12'%3E%3Cpath d='M2 5.500 5 9.500 10 1.500' fill='none' stroke='%23000' stroke-width='1.900'/%3E%3C/svg%3E") center / 11px no-repeat; }
    .dim { color: #8c8c8c; }
    .sel { margin-top: 6px; }
    .fm { margin-top: 5px; }
    .mapping { display: flex; gap: 6px; flex: none; height: 257px; margin: 1px 0 5px; }
    .tbox { flex: 1; min-width: 0; border: 1px solid #bbb; background: #fff; display: flex; flex-direction: column; }
    .fill { flex: 1; display: flex; }
    .gutter { width: 10px; background: #f0f0f0; border-right: 1px solid #d8d8d8; }
    table { border-collapse: collapse; table-layout: fixed; width: 100%; font: 11px/16px "Open Sans", sans-serif; color: #222; }
    th { height: 19px; padding: 0; font-weight: 400; border: 1px solid #cfcfcf; border-width: 0 1px 1px 0; background: linear-gradient(#fff, #efefef); white-space: nowrap; }
    tbody th { background: #f2f2f2; }
    td { height: 28px; padding: 0; border: 1px solid #d4d4d4; border-width: 0 1px 1px 0; overflow: hidden; }
    td > input { width: 100%; padding: 0 3px; display: block; }
    .c0 { width: 10px; } .c1 { width: 96px; } .c2 { width: 63px; } .c3 { width: 181px; } .c4 { width: 40px; }
    .expr { display: flex; height: 27px; }
    .ebox { width: 71px; display: flex; align-items: center; border: 1px solid #bdbdbd; border-radius: 2px; padding-left: 1px; }
    .ebox b { font: 700 9px/12px "DejaVu Sans Condensed", "DejaVu Sans", sans-serif; color: #666; }
    .ebox input { width: 16px; font: 10px/14px "Open Sans", sans-serif; padding-left: 2px; }
    .ebox .x { width: 11px; height: 11px; margin: 0 2px; }
    .ebox .drop { flex: 1; height: 100%; background: #f4f4f4; display: grid; place-items: center; margin-left: 2px; }
    .ebox .drop .ic { width: 9px; height: 9px; }
    .eps { width: 20px; margin-left: auto; border: 1px solid #b4b4b4; border-radius: 2px; background: linear-gradient(#fff, #e6e6e6); color: #6b3a78; font: 18px/20px "DejaVu Serif", serif; }
    td .combo { height: 27px; font: 10px/14px Roboto, sans-serif; }
    .hs { height: 14px; display: flex; border-top: 1px solid #c6c6c6; background: #e4e4e4; }
    .hs button { width: 13px; background: #fafafa; display: grid; place-items: center; border: 1px solid #cfcfcf; border-width: 0 1px; }
    .hs .ic { width: 9px; height: 9px; }
    .hs .flip { transform: rotate(180deg); }
    .hs .thumb { width: 348px; background: linear-gradient(#fff, #f0f0f0); border-right: 1px solid #c6c6c6; }
    .hs .rest { flex: 1; }
    .side { display: flex; flex-direction: column; gap: 6px; flex: none; }
    .load { gap: 6px; }
    .load label { width: 133px; white-space: nowrap; }
    .load .tpl { flex: 1; }
    .lf { width: 61px; }
    .rf { margin-top: 5px; }
    .orow { gap: 6px; margin-top: 1px; }
    .op { margin-top: 5px; }
    .out { flex: 1; height: 19px; display: flex; align-items: center; background: #fff; border: 1px solid #b4b4b4; border-radius: 2px; padding: 0 4px 0 2px; }
    .out input { flex: 1; }
    .out .ic { width: 11px; height: 11px; }
    .foot { display: grid; grid-template-columns: 1fr 60px; gap: 5px 6px; padding: 23px 10px 9px 9px; }
    .bar { height: 19px; background: #fff; border: 1px solid #b9b9b9; border-radius: 2px; text-align: center; line-height: 18px; }
    .btns { display: flex; justify-content: flex-end; gap: 5px; }
    .btns .btn { width: 61px; }
    .btns .batch { width: 107px; margin-right: auto; }
    .btns .run { border-color: #5aaae4; background: linear-gradient(#fff, #e6eef6); }
    .foot .btn { height: 20px; }
    /* markup drawn over the dialog */
    .mark { position: absolute; pointer-events: none; }
    .frame { border: 3px solid #00b050; width: 66px; height: 27px; left: 121px; }
    .f1 { top: 222px; } .f2 { top: 250px; }
    .rframe { border: 2px solid #f00; }
    .r1 { left: 13px; top: 81px; width: 391px; height: 22px; }
    .r2 { left: 460px; top: 447px; width: 26px; height: 25px; }
    .r3 { left: 490px; top: 569px; width: 67px; height: 25px; }
    .lines { left: 147px; top: 238px; width: 180px; height: 60px; }
    .note { background: #fff; border: 1px solid #00b050; top: 297px; height: 74px; color: #000; font: 24px/31px Lato, sans-serif; text-align: center; padding-top: 4px; white-space: nowrap; }
    .n1 { left: 69px; width: 168px; } .n2 { left: 243px; width: 143px; }
    .b2 { left: 332px; top: 92px; } .b3 { left: 85px; top: 230px; } .b4 { left: 486px; top: 443px; } .b5 { left: 469px; top: 555px; }
  `];
  render() {
    return html`
      <div class="title">${icon("qgis")}<span class="name">Refactor Fields</span><button class="close" aria-label="Close dialog">${icon("x")}</button></div>
      <div class="body">
        <div class="left">
          <div class="tabs"><button class="tab on">Parameters</button><button class="tab">Log</button></div>
          <div class="pane">
            <label class="lab" for="inl">Input layer</label>
            <div class="row inrow">
              <div class="combo lead inl">
                <select id="inl"><option>Municipalities_on_lakes_pop [EPSG:32632]</option></select>${icon("poly", "lay")}${icon("tridown", "dd")}
              </div>
              <div class="gapr">${icon("iterate", "big")}${icon("wrench", "big")}<button class="btn sq more" aria-label="Advanced">...${icon("tridown")}</button></div>
            </div>
            <label class="check dim sel"><input type="checkbox" disabled />Selected features only</label>
            <div class="lab fm">Fields mapping</div>
            <div class="mapping">
              <div class="tbox">
                <table>
                  <colgroup><col class="c0"><col class="c1"><col class="c2"><col class="c3"><col class="c4"><col></colgroup>
                  <thead><tr><th></th><th>Source Expression</th><th>Name</th><th>Type</th><th>Length</th><th>Precision</th></tr></thead>
                  <tbody>${fields.map((f, i) => html`<tr>
                    <th scope="row">${i}</th>
                    <td><div class="expr"><div class="ebox"><b>${f.g}</b><input aria-label="Source expression ${i}" .value=${f.s} />${icon("closeround", "x")}<button class="drop" aria-label="Choose field">${icon("tridown")}</button></div><button class="eps" aria-label="Expression builder">ε</button></div></td>
                    <td><input aria-label="Name ${i}" .value=${f.name} /></td>
                    <td><div class="combo"><select aria-label="Type ${i}"><option>${f.type}</option></select>${icon("tridown", "dd")}</div></td>
                    <td><input aria-label="Length ${i}" .value=${f.len} /></td>
                    <td><input aria-label="Precision ${i}" .value=${"0"} /></td>
                  </tr>`)}</tbody>
                </table>
                <div class="fill"><div class="gutter"></div></div>
                <div class="hs"><button aria-label="Scroll left">${icon("tri", "flip")}</button><div class="thumb"></div><div class="rest"></div><button aria-label="Scroll right">${icon("tri")}</button></div>
              </div>
              <div class="side">${["addfield", "delfield", "up", "down", "clear"].map((n) => html`<button class="btn sq" aria-label=${n}>${icon(n)}</button>`)}</div>
            </div>
            <div class="row load">
              <label for="tpl">Load fields from template layer</label>
              <div class="combo lead tpl"><select id="tpl"><option>Lakes</option></select>${icon("poly", "lay")}${icon("tridown", "dd")}</div>
              <button class="btn lf">Load Fields</button>
            </div>
            <label class="lab rf" for="out">Refactored</label>
            <div class="row orow">
              <div class="out"><input id="out" .value=${"C:/Users/alber/OneDrive/Desktop/GIS4Schools/Data/Municipalities.shp"} />${icon("clear")}</div>
              <button class="btn sq more" aria-label="Browse output">...${icon("tridown")}</button>
            </div>
            <label class="check op"><input type="checkbox" checked />Open output file after running algorithm</label>
          </div>
        </div>
        <div class="split">${icon("tri")}</div>
        <div class="help"><h2>Refactor fields</h2>${help.map((p) => html`<p>${p.map((l, i) => html`${i ? html`<br>` : nothing}${l}`)}</p>`)}</div>
      </div>
      <div class="foot">
        <div class="bar" role="progressbar" aria-valuenow="0">0%</div><button class="btn dim" disabled>Cancel</button>
        <div class="btns"><button class="btn batch">Run as Batch Process...</button><button class="btn run">Run</button><button class="btn">Close</button></div><button class="btn">Help</button>
      </div>
      <div class="mark frame f1"></div><div class="mark frame f2"></div>
      <div class="mark rframe r1"></div><div class="mark rframe r2"></div><div class="mark rframe r3"></div>
      <svg class="mark lines" viewBox="0 0 180 60" fill="none"><path d="M40 3.500H167.500V52M6.500 39V52" stroke="#00b050"/><path d="M163 50h9l-4.500 9ZM2 50h9l-4.500 9Z" fill="#00b050"/></svg>
      <div class="mark note n1">Type<br>«<b>Population</b>»</div>
      <div class="mark note n2">Type<br>«<b>Province</b>»</div>
      <step-badge class="mark b2" n="2"></step-badge><step-badge class="mark b3" n="3" tone="green"></step-badge>
      <step-badge class="mark b4" n="4"></step-badge><step-badge class="mark b5" n="5"></step-badge>
    `;
  }
}

/* ---------- application ---------- */
@customElement("app-root")
class AppRoot extends LitElement {
  static styles = [base, css`
    :host { display: block; min-height: 100vh; background: #fff; font: 10px/14px "Open Sans", sans-serif; color: #222; position: relative; border-right: 1px solid #c8c8c8; padding: 4px 4px 18px 3px; overflow: hidden; }
    .app { min-height: calc(100vh - 22px); background: #f0f0f0; display: flex; flex-direction: column; }
    .menu { display: flex; gap: 11px; height: 18px; padding: 0 8px; border-bottom: 1px solid #d8d8d8; align-items: center; }
    .tb { height: 28px; display: flex; align-items: center; background: linear-gradient(#fbfbfb, #efefef); border-bottom: 1px solid #d0d0d0; }
    .tb.low { height: 27px; }
    .grip { flex: none; width: 6px; height: 14px; margin: 0 3px 0 4px; background: radial-gradient(circle, #bbb 0 .7px, transparent 1px) 0 0 / 3px 3px; }
    .grip:first-child { margin: 0 2px; }
    .group { flex: none; display: flex; align-items: center; }
    .tool { flex: 1 1 0; min-width: 0; height: 23px; display: grid; place-items: center; overflow: visible; }
    .tool.pressed { background: #d9dadb; border: 1px solid #b5b5b5; border-radius: 2px; }
    .tool.arr { flex: 0 0 10px; }
    .arr .ic { width: 7px; height: 7px; }
    .tool.off .ic { opacity: .4; filter: grayscale(.7); }
    .vsep { flex: 0 0 5px; height: 18px; background: linear-gradient(90deg, transparent 2px, #ccc 2px 3px, transparent 3px); }
    .num { display: flex; width: 65px; height: 17px; border: 1px solid #bbb; border-radius: 2px; color: #999; margin-right: 1px; }
    .num input { flex: 1; min-width: 0; padding-left: 3px; background: #f5f5f5; }
    .spin { width: 12px; flex: none; display: grid; place-items: center; border-left: 1px solid #ccc; background: #fafafa; }
    .spin svg { width: 8px; height: 12px; display: block; }
    .sel { display: grid; align-items: center; border: 1px solid #bbb; border-radius: 2px; height: 17px; background: #f7f7f7; }
    .sel > * { grid-area: 1 / 1; }
    .sel select { appearance: none; height: 100%; width: 100%; padding: 0 3px; }
    .sel .ic { width: 8px; height: 8px; justify-self: end; margin-right: 6px; pointer-events: none; }
    .px { width: 71px; color: #999; margin-right: 1px; }
    .px .ic { opacity: .5; }
    .main { flex: 1; display: flex; min-height: 0; }
    .left { width: 304px; flex: none; display: flex; flex-direction: column; }
    map-canvas { flex: 1; margin: 1px 0 0 4px; border-left: 1px solid #ccc; contain: size; }
    .right { width: 261px; margin-left: 6px; flex: none; display: flex; flex-direction: column; }
    .dock { display: flex; flex-direction: column; }
    .dtitle { display: flex; align-items: center; height: 16px; padding: 0 1px 0 3px; gap: 1px; }
    .dtitle span { flex: 1; }
    .dtitle .ic { width: 9px; height: 9px; }
    .dbar { display: flex; align-items: center; height: 18px; padding-left: 5px; gap: 6px; margin-bottom: 2px; }
    .dbar .ic { width: 12px; height: 12px; }
    .dbar .vsep { margin: 0 -3px 0 -2px; height: 12px; }
    .dbar .slim { margin: 0 -1px; }
    .dbar .slim .ic { width: 6px; height: 6px; opacity: .6; }
    .box { background: #fff; border: 1px solid #bfbfbf; display: flex; }
    .brow { height: 227px; overflow: hidden; }
    ul { list-style: none; margin: 0; padding: 0; flex: 1; display: grid; grid-auto-rows: 1fr; }
    .brow ul { height: 235px; flex: none; width: 290px; }
    li { display: flex; align-items: center; min-height: 0; white-space: nowrap; width: 267px; gap: 2px; }
    li .ic { width: 14px; height: 14px; }
    li .tw { width: 8px; height: 8px; }
    li .lbl { margin-left: 3px; }
    .d0 { padding-left: 5px; } .d1 { padding-left: 23px; } .d2 { padding-left: 41px; }
    .d0 .tw, .d1 .tw, .d2 .tw { margin-right: 4px; }
    li.hot { background: #ececec; }
    .vs { width: 12px; flex: none; margin-left: auto; display: flex; flex-direction: column; background: #e2e2e2; border-left: 1px solid #c8c8c8; }
    .vs button { height: 12px; background: #fafafa; display: grid; place-items: center; }
    .vs .ic { width: 8px; height: 8px; }
    .vs .thumb { height: 98px; background: #f9f9f9; border: 1px solid #c8c8c8; border-width: 1px 0; }
    .vs .gap { flex: 1; }
    .flip { transform: rotate(180deg); }
    .dots { height: 4px; display: grid; place-items: center; }
    .dots i { width: 12px; height: 1px; background: repeating-linear-gradient(90deg, #bbb 0 1px, transparent 1px 2px); }
    .grow { flex: 1; min-height: 0; }
    .grow .box { flex: 1; }
    .lay { height: 79px; flex: 1; font-weight: 700; color: #000; }
    .lay .chk { appearance: none; width: 13px; height: 13px; border: 1px solid #bbb; background: #fff; margin-right: 2px; }
    .lay .chk:checked, .render:checked { background: #fff url("data:image/svg+xml,%3Csvg xmlns='http://www.w3.org/2000/svg' viewBox='0 0 12 12'%3E%3Cpath d='M2 5.500 5 9.500 10 1.500' fill='none' stroke='%23000' stroke-width='1.900'/%3E%3C/svg%3E") center / 11px no-repeat; }
    .sw { width: 14px; height: 14px; flex: none; }
    .sw.blue { background: #3fb4ff; } .sw.orange { background: #ff8420; border: 1px solid #6c4520; } .sw.pink { border: 1px solid #f77; }
    .lay label { display: flex; align-items: center; gap: 2px; }
    .lay label .lbl { margin-left: 2px; }
    .gone { font-style: italic; color: #777; }
    .cur { text-decoration: underline; }
    .find { display: flex; align-items: center; height: 17px; background: #fff; border: 1px solid #c2c2c2; padding: 0 5px; gap: 4px; }
    .find input { flex: 1; min-width: 0; }
    .find .ic { width: 10px; height: 10px; }
    .tbx ul { height: 32px; }
    .tbx li { width: auto; }
    .tbx .d0 { padding-left: 4px; } .tbx .d1 { padding-left: 36px; background: #0078d7; color: #cfe6fb; }
    .status { height: 22px; display: flex; align-items: center; padding: 0 5px 0 3px; font-family: Roboto, sans-serif; }
    .loc { width: 165px; height: 17px; border: 1px solid #c2c2c2; background: #fff; display: flex; align-items: center; padding-left: 4px; gap: 4px; border-radius: 2px; }
    .loc .ic { width: 11px; height: 11px; } .loc input { flex: 1; min-width: 0; font-family: "Open Sans", sans-serif; }
    .loc input::placeholder { color: #777; opacity: 1; }
    .sgap { flex: 1; }
    .status label, .status .crs { white-space: nowrap; }
    .field { height: 17px; border: 1px solid #bbb; background: #fff; border-radius: 2px; padding-left: 3px; margin-left: 2px; }
    .coord { width: 79px; } .status .ic { width: 14px; height: 14px; }
    .status .sel { width: 66px; margin-left: 2px; background: #fff; } .status .sel .ic { width: 8px; height: 8px; }
    .status .num { width: 63px; color: inherit; margin: 0 0 0 2px; background: #fff; } .status .num input { background: #fff; }
    .m1 { margin-left: 4px; } .m2 { margin-left: 6px; }
    .crs { margin-left: 11px; } .msg { margin-left: 12px; }
    .render { appearance: none; width: 13px; height: 13px; border: 1px solid #bbb; margin-right: 3px; vertical-align: middle; }
    .crs { display: flex; align-items: center; gap: 2px; }
    refactor-dialog { position: absolute; left: 411px; top: 81px; width: 697px; height: 603px; }
    .tag { position: absolute; }
    .hit { left: 1138px; top: 200px; width: 104px; height: 20px; border: 2px solid #f00; }
    .hitn { left: 1229px; top: 178px; }
    .steps { position: absolute; left: 19px; top: 526px; width: 382px; background: rgba(255, 255, 255, .72); display: grid; gap: 1px; padding: 4px 0 0 9px; font: 24px/31px Lato, sans-serif; color: #000; height: 202px; align-content: start; }
    .step { display: grid; grid-template-columns: 32px 1fr; gap: 10px; min-height: 32px; line-height: 32px; white-space: nowrap; }
    .step:first-child { min-height: 66px; line-height: 31px; }
    .step span { padding-top: 1px; height: 32px; }
    .step:first-child span { white-space: normal; width: 310px; padding-top: 0; }
  `];
  tool(item: Item) {
    if (item === "|") return html`<span class="vsep"></span>`;
    const name = item.replace(/[!~]/, "");
    const cls = { tool: true, pressed: item.endsWith("!"), off: item.endsWith("~"), arr: name === "arrow" };
    return html`<button class=${classMap(cls)} aria-label=${name}>${icon(name)}</button>`;
  }
  tools(width: number, items: Item[]) {
    return html`<div class="group" style="width:${width}px">${items.map((i) => this.tool(i))}</div>`;
  }
  groups(gs: Group[]) {
    return gs.map((g) => html`<span class="grip"></span>${this.tools(g.width, g.items)}`);
  }
  spin() {
    return html`<span class="spin"><svg viewBox="0 0 8 12"><path d="M1 5h6L4 1ZM1 7h6l-3 4Z" fill="#666"/></svg></span>`;
  }
  dockTitle(t: string) {
    return html`<div class="dtitle"><span>${t}</span><button aria-label="Float ${t}">${icon("float")}</button><button aria-label="Close ${t}">${icon("shut")}</button></div>`;
  }
  bar(items: string[]) {
    return html`<div class="dbar">${items.map((n) => (n === "|" ? html`<span class="vsep"></span>` : html`<button class=${n === "arrow" ? "slim" : ""} aria-label=${n}>${icon(n)}</button>`))}</div>`;
  }
  layer(name: string, sw: string, cls = "", on = true) {
    return html`<li class="d0">${name === "Temperature" ? icon("tri", "tw") : icon("none", "tw")}
      <label><input class="chk" type="checkbox" .checked=${on} />${sw === "point" ? icon("point") : html`<span class="sw ${sw}"></span>`}<span class="lbl ${cls}">${name}</span></label></li>`;
  }
  render() {
    return html`
      <div class="app">
        <nav class="menu">${menus.map(([a, u, b]) => html`<button>${a}<u>${u}</u>${b}</button>`)}</nav>
        <div class="tb low">${this.groups(row1)}</div>
        <div class="tb">${this.groups(row2)}<span class="grip"></span>${this.tools(173, digitizing)}${this.tools(246, advanced)}<span class="grip"></span></div>
        <div class="tb">
          ${this.groups([{ width: 71, items: ["magnet", "vsnap~", "dots!"] }])}
          <div class="num"><input aria-label="Snapping tolerance" .value=${"12"} />${this.spin()}</div>
          <div class="sel px"><select aria-label="Units"><option>px</option></select>${icon("tridown")}</div>
          ${this.tools(128, ["topo", "polyg", "xcross~", "cutseg~", "arrow~", "trace~"])}
          ${this.groups([{ width: 57, items: ["select", "arrow", "selform"] }])}
        </div>
        <div class="tb low">${this.groups([{ width: 47, items: ["greenlens", "maptool"] }])}</div>
        <div class="main">
          <div class="left">
            <section class="dock">
              ${this.dockTitle("Browser")}${this.bar(["addlayer", "refresh", "filter", "collapse", "info"])}
              <div class="box brow">
                <ul>${tree.map((n) => html`<li class="d${n.d} ${n.sel ? "hot" : ""}">${icon(n.a ?? "none", "tw")}${icon(n.i)}<span class="lbl">${n.t}</span></li>`)}</ul>
                <div class="vs"><button aria-label="Scroll up">${icon("tridown", "flip")}</button><div class="thumb"></div><div class="gap"></div><button aria-label="Scroll down">${icon("tridown")}</button></div>
              </div>
            </section>
            <div class="dots"><i></i></div>
            <section class="dock grow">
              ${this.dockTitle("Layers")}${this.bar(["brush", "group", "eye", "filter", "eps", "arrow", "expand", "collapse", "removelayer"])}
              <div class="box"><ul class="lay">
                ${this.layer("Temperature", "point", "gone", false)}
                ${this.layer("Lakes", "blue")}
                ${this.layer("Municipalities_on_lakes_pop", "orange", "cur")}
                ${this.layer("Municipalities_OSM", "pink")}
                <li class="d0">${icon("none", "tw")}${icon("tablegrey")}<span class="lbl">Population</span></li>
              </ul></div>
            </section>
          </div>
          <map-canvas></map-canvas>
          <section class="right dock">
            ${this.dockTitle("Processing Toolbox")}${this.bar(["redcog", "pyarrow", "clock", "log", "|", "note", "|", "wrench"])}
            <div class="find">${icon("search")}<input aria-label="Search algorithms" .value=${"refac"} />${icon("clear")}</div>
            <div class="box grow tbx"><ul>
              <li class="d0">${icon("tridown", "tw")}${icon("qgis")}<span class="lbl">Vector table</span></li>
              <li class="d1">${icon("gearlight")}<span class="lbl">Refactor fields</span></li>
            </ul></div>
          </section>
        </div>
        <footer class="status">
          <div class="loc">${icon("search")}<input aria-label="Locate" placeholder="Type to locate (Ctrl+K)" /></div>
          <span class="sgap"></span>
          <label for="co">Coordinate</label><input id="co" class="field coord" .value=${"547344,5181536"} /><span class="m1">${icon("extents")}</span>
          <label class="m2" for="sc">Scale</label><div class="sel"><select id="sc"><option>1:908086</option></select>${icon("tridown")}</div>
          <span class="m2">${icon("lock")}</span>
          <label class="m1" for="mg">Magnifier</label><div class="num"><input id="mg" .value=${"100%"} />${this.spin()}</div>
          <label class="m1" for="ro">Rotation</label><div class="num"><input id="ro" .value=${"0,0 °"} />${this.spin()}</div>
          <label class="m1"><input class="render" type="checkbox" checked />Render</label>
          <span class="crs">${icon("crs")}EPSG:32632</span><span class="msg">${icon("message")}</span>
        </footer>
      </div>
      <refactor-dialog></refactor-dialog>
      <div class="tag hit"></div><step-badge class="tag hitn" n="1"></step-badge>
      <div class="steps">${steps.map(([n, tone, t]) => html`<div class="step"><step-badge n=${n} tone=${tone}></step-badge><span>${t}</span></div>`)}</div>
    `;
  }
}
